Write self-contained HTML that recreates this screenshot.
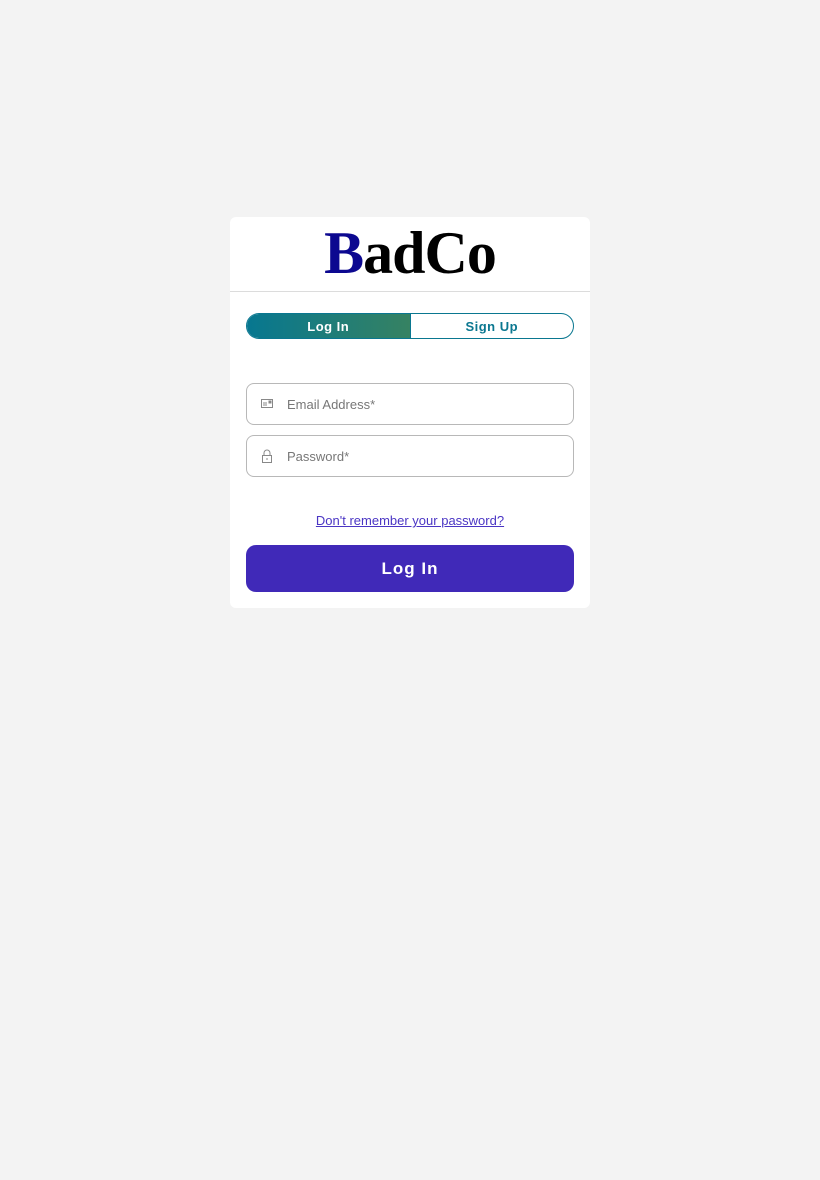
<!DOCTYPE html>
<html><head><meta charset="utf-8"><style>
*{box-sizing:border-box;margin:0;padding:0}
body{width:820px;height:1180px;background:#f3f3f3;font-family:"Liberation Sans",sans-serif;position:relative}
.card{position:absolute;left:230px;top:217px;width:360px;height:391px;background:#fff;border-radius:6px}
.hdr{height:75px;border-bottom:1px solid #dcdcdc;position:relative}
.logo{position:absolute;left:90px;top:4px;width:180px;text-align:center;font-family:"Liberation Serif",serif;font-weight:bold;font-size:60px;line-height:64px;letter-spacing:-1px;transform:scaleY(1.0)}
.logo .b{color:#0c0890}
.toggle{position:absolute;left:16px;top:96px;width:328px;height:26px;border:1px solid #0a7790;border-radius:13px;overflow:hidden;display:flex;font-weight:bold;font-size:13px;letter-spacing:.5px}
.toggle div{flex:1;display:flex;align-items:center;justify-content:center}
.t1{background:linear-gradient(90deg,#077790,#368262);color:#fff}
.t2{color:#0a7790;border-left:1px solid #0a7790}
.inp{position:absolute;left:16px;width:328px;height:42px;border:1px solid #b8b8b8;border-radius:8px;font-size:13px;color:#777;display:flex;align-items:center;padding-left:40px}
.inp svg{position:absolute;left:14px;top:14px}
.link{position:absolute;left:0;width:360px;top:296px;text-align:center;font-size:13px;color:#4a35c4;}
.link span{text-decoration:underline}
.btn{position:absolute;left:16px;top:328px;width:328px;height:47px;border-radius:10px;background:#4029b8;color:#fff;font-size:17px;font-weight:bold;letter-spacing:1px;display:flex;align-items:center;justify-content:center}
</style></head><body>
<div class="card">
 <div class="hdr"><div class="logo"><span class="b">B</span>adCo</div></div>
 <div class="toggle"><div class="t1">Log In</div><div class="t2">Sign Up</div></div>
 <div class="inp" style="top:166px"><svg width="12" height="11" viewBox="0 0 12 11"><rect x=".5" y="1.5" width="11" height="8" fill="none" stroke="#888"/><line x1="2" y1="5" x2="6" y2="5" stroke="#888"/><line x1="2" y1="7" x2="6" y2="7" stroke="#888"/><rect x="7.5" y="2.5" width="3" height="3" fill="#888"/></svg>Email Address*</div>
 <div class="inp" style="top:218px"><svg width="12" height="14" viewBox="0 0 12 14" style="top:13px"><path d="M3 6V4a3 3 0 0 1 6 0v2" fill="none" stroke="#888"/><rect x="1.5" y="6.5" width="9" height="7" fill="none" stroke="#888"/><line x1="6" y1="9" x2="6" y2="11" stroke="#888"/></svg>Password*</div>
 <div class="link"><span>Don't remember your password?</span></div>
 <div class="btn">Log In</div>
</div>
</body></html>
